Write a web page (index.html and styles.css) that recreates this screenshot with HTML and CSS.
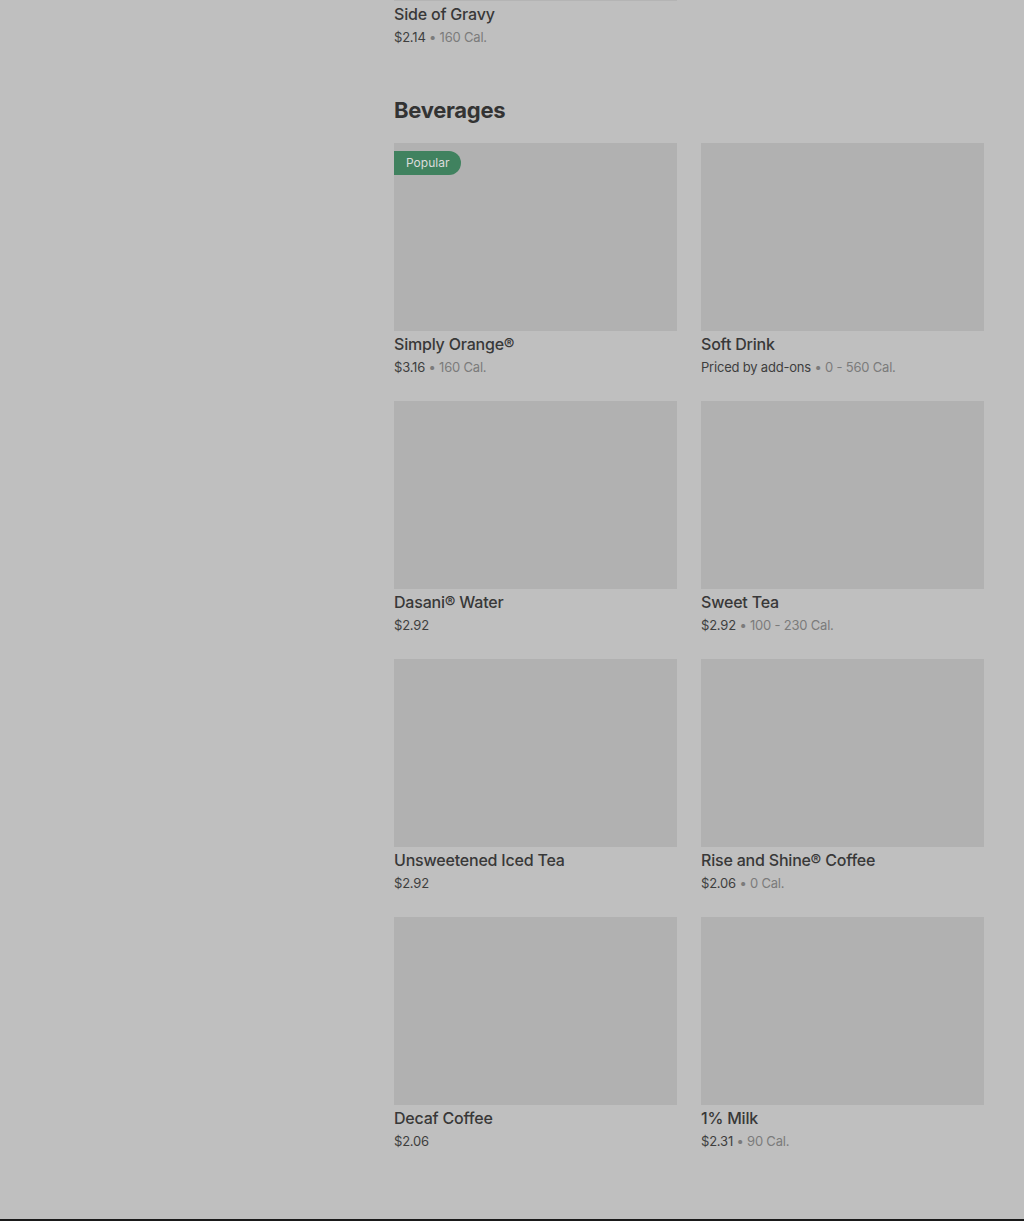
FILE: index.html
```html
<!DOCTYPE html>
<html lang="en">
<head>
    <meta charset="UTF-8">
    <meta name="viewport" content="width=device-width, initial-scale=1.0">
    <title>Menu - Beverages</title>
    <link rel="stylesheet" href="styles.css">
</head>
<body>
    <main class="menu">
        <!-- tail of the previous section -->
        <div class="item item-tail">
            <div class="item-image item-image-cut"></div>
            <div class="item-title">Side of Gravy</div>
            <div class="item-meta"><span class="price">$2.14</span> • <span class="cal">160 Cal.</span></div>
        </div>

        <section class="section">
            <h2 class="section-title">Beverages</h2>
            <div class="grid">
                <div class="item">
                    <div class="item-image"><span class="badge">Popular</span></div>
                    <div class="item-title">Simply Orange®</div>
                    <div class="item-meta"><span class="price">$3.16</span> • <span class="cal">160 Cal.</span></div>
                </div>
                <div class="item">
                    <div class="item-image"></div>
                    <div class="item-title">Soft Drink</div>
                    <div class="item-meta"><span class="price">Priced by add-ons</span> • <span class="cal">0 - 560 Cal.</span></div>
                </div>
                <div class="item">
                    <div class="item-image"></div>
                    <div class="item-title">Dasani® Water</div>
                    <div class="item-meta"><span class="price">$2.92</span></div>
                </div>
                <div class="item">
                    <div class="item-image"></div>
                    <div class="item-title">Sweet Tea</div>
                    <div class="item-meta"><span class="price">$2.92</span> • <span class="cal">100 - 230 Cal.</span></div>
                </div>
                <div class="item">
                    <div class="item-image"></div>
                    <div class="item-title">Unsweetened Iced Tea</div>
                    <div class="item-meta"><span class="price">$2.92</span></div>
                </div>
                <div class="item">
                    <div class="item-image"></div>
                    <div class="item-title">Rise and Shine® Coffee</div>
                    <div class="item-meta"><span class="price">$2.06</span> • <span class="cal">0 Cal.</span></div>
                </div>
                <div class="item">
                    <div class="item-image"></div>
                    <div class="item-title">Decaf Coffee</div>
                    <div class="item-meta"><span class="price">$2.06</span></div>
                </div>
                <div class="item">
                    <div class="item-image"></div>
                    <div class="item-title">1% Milk</div>
                    <div class="item-meta"><span class="price">$2.31</span> • <span class="cal">90 Cal.</span></div>
                </div>
            </div>
        </section>
    </main>
    <footer class="footer"></footer>
</body>
</html>
```

FILE: styles.css
```css
body {
    margin: 0;
    background-color: #bfbfbf;
    font-family: Inter, "Noto Sans", sans-serif;
    color: #3a3a3a;
}
.menu {
    width: 590px;
    margin-left: 394px;
    padding-bottom: 69px;
}
.item-tail {
    width: 283px;
}
.item-image {
    height: 188px;
    background-color: #b1b1b1;
    position: relative;
}
.item-image-cut {
    height: 1px;
    background-color: #b4b4b4;
}
.item-tail .item-title {
    margin-top: 3px;
}
.section {
    margin-top: 48px;
}
.section-title {
    font-size: 22px;
    line-height: 32px;
    font-weight: 700;
    margin: 0 0 17px;
    letter-spacing: -0.3px;
    color: #333;
}
.grid {
    display: grid;
    grid-template-columns: 1fr 1fr;
    column-gap: 24px;
    row-gap: 25px;
}
.item-title {
    margin-top: 3px;
    font-size: 16px;
    line-height: 20px;
    font-weight: 500;
    letter-spacing: -0.2px;
    color: #383838;
}
.item-meta {
    margin-top: 4px;
    font-size: 13px;
    line-height: 18px;
    letter-spacing: -0.2px;
    color: #7b7b7b;
}
.price {
    color: #3e3e3e;
}
.badge {
    position: absolute;
    top: 8px;
    left: 0;
    height: 24px;
    line-height: 24px;
    padding: 0 12px;
    font-size: 12px;
    color: #dcdcdc;
    background-color: #40825f;
    border-radius: 0 12px 12px 0;
}
.footer {
    height: 3px;
    background-color: #1a1a1a;
}
```
